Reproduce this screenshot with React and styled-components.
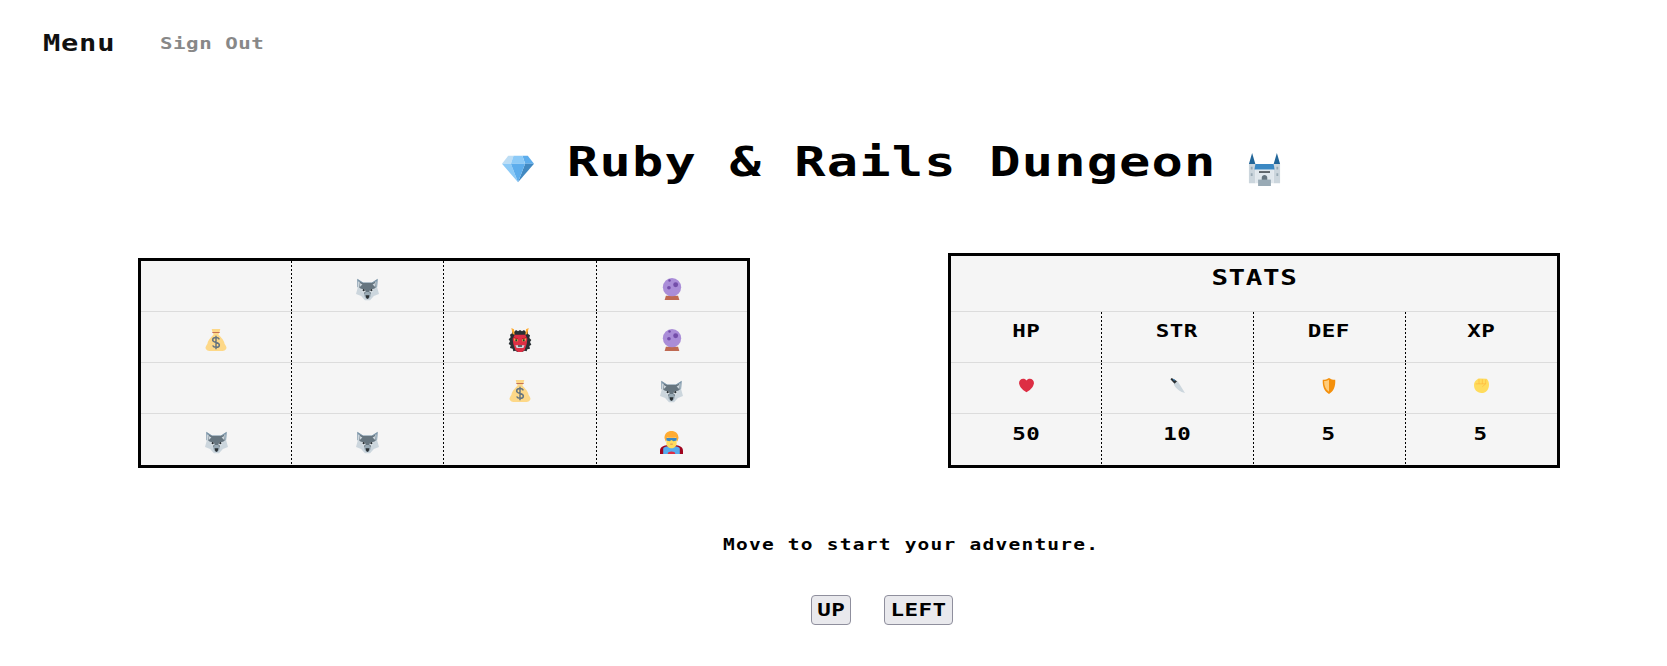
import React from "react";
import styled, { createGlobalStyle } from "styled-components";

const Global = createGlobalStyle`
  html, body { margin: 0; padding: 0; background: #fff; }
  body { font-family: "DejaVu Sans Mono", "Liberation Mono", monospace; color: #000; }
`;

const Page = styled.div`
  width: 1667px;
  height: 666px;
  overflow: hidden;
`;

const Wide = styled.span`
  display: inline-block;
  white-space: nowrap;
  transform: scaleX(${(p) => p.$sx || 1.25});
  transform-origin: ${(p) => p.$origin || "center"};
`;

const Nav = styled.nav`
  display: flex;
  align-items: center;
  height: 28px;
  padding: 29px 0 0 43px;
`;

const MenuLabel = styled(Wide)`
  width: 117px;
  font-size: 23px;
  font-weight: 700;
  letter-spacing: 0.6px;
  color: #111;
`;

const SignOut = styled(Wide)`
  font-size: 16px;
  font-weight: 700;
  letter-spacing: 0.4px;
  color: #888;
`;

const Title = styled.h1`
  display: flex;
  align-items: center;
  margin: 0;
  padding: 74px 0 0 502px;
  height: 62px;
  gap: 33px;
  font-size: 40px;
  font-weight: 700;
  line-height: 62px;
`;

const TitleText = styled(Wide)`
  width: 648px;
  letter-spacing: 0.9px;
`;

const Boards = styled.section`
  display: flex;
  align-items: flex-end;
  gap: 198px;
  height: 215px;
  margin-top: 60px;
  padding-left: 138px;
`;

const Table = styled.div`
  width: 606px;
  border: 3px solid #000;
  background: #f5f5f5;
`;

const Row = styled.div`
  display: grid;
  grid-template-columns: ${(p) => p.$cols};
  height: ${(p) => p.$h || 50}px;
  border-bottom: 1px solid #dcdcdc;
  &:last-child { border-bottom: 0; }
`;

const Cell = styled.div`
  display: flex;
  align-items: center;
  justify-content: center;
  padding-bottom: ${(p) => p.$lift || 0}px;
  box-sizing: border-box;
  &:not(:first-child) {
    background: linear-gradient(#000 50%, transparent 0) left top / 1px 4px repeat-y;
  }
`;

const Heading = styled.div`
  height: 56px;
  padding-top: 8px;
  box-sizing: border-box;
  border-bottom: 1px solid #dcdcdc;
  text-align: center;
  font-size: 22px;
  font-weight: 700;
  line-height: 28px;
`;

const HeadingText = styled(Wide)`
  letter-spacing: 0.5px;
`;

const StatText = styled(Wide)`
  font-size: 18px;
  font-weight: 700;
  letter-spacing: 0.36px;
`;

const Message = styled.p`
  margin: 67px 0 0 723px;
  font-size: 15px;
  font-weight: 700;
  line-height: 20px;
`;

const MessageText = styled(Wide)`
  letter-spacing: 0.95px;
`;

const Controls = styled.div`
  display: flex;
  gap: 33px;
  margin: 40px 0 0 811px;
`;

const MoveButton = styled.button`
  display: flex;
  align-items: center;
  justify-content: center;
  width: ${(p) => p.$w}px;
  height: 30px;
  padding: 0;
  box-sizing: border-box;
  border: 1px solid #8f8f9d;
  border-radius: 4px;
  background: #e9e9ed;
  color: #000;
  font-family: inherit;
  font-size: 18px;
  font-weight: 700;
  line-height: 28px;
`;

const ButtonText = styled(Wide)`
  letter-spacing: 0.36px;
`;

const Glyph = styled.svg`
  display: block;
  flex: none;
  overflow: hidden;
`;

const Icon = ({ size = 22, children, ...rest }) => (
  <Glyph width={size} height={size} viewBox="0 0 36 36" {...rest}>
    {children}
  </Glyph>
);

const Wolf = () => (
  <Icon size={23} style={{ marginTop: 6 }}>
    <path fill="#CCD6DD" d="M2 1l9 6h14l9-6-1 13 3 11-8 3-6 7h-8l-6-7-8-3 3-11z" />
    <path fill="#7C95A8" d="M2 1l9 6h14l9-6-1 13-1 1V5l-8 4H11L3 5v10l-1-1z" />
    <path fill="#66757F" d="M11 8h14l5-2 1 9-6 4-3 8h-8l-3-8-6-4 1-9z" />
    <path fill="#CCD6DD" d="M6 8l4 2-4 4zM30 8l-4 2 4 4z" />
    <path fill="#E1E8ED" d="M8 17l6 1 1 4-4 1zM28 17l-6 1-1 4 4 1z" />
    <circle fill="#292F33" cx="12" cy="19" r="1.700" />
    <circle fill="#292F33" cx="24" cy="19" r="1.700" />
    <path fill="#99AAB5" d="M15 22h6l2 6-3 5h-4l-3-5z" />
    <path fill="#292F33" d="M15 27h6l-1 4-2 2-2-2z" />
  </Icon>
);

const Bag = () => (
  <Icon style={{ marginTop: 6 }}>
    <path fill="#FDD888" d="M11 0h14l-1 4-2 5c2 3 9 8 10 15 1 2 4 5 3 8-2 3-4 4-6 4H7c-2 0-4-1-6-4-1-3 2-6 3-8 1-7 8-12 10-15l-2-5z" />
    <path fill="#BF6952" d="M12 5h12v1.500H12z" />
    <path fill="none" stroke="#67757F" strokeWidth="2.400" d="M23.500 17c-1-2-3-3-5.500-3-3 0-5.500 1.500-5.500 4 0 5 11 3 11 8 0 2.500-2.500 4-5.500 4-2.500 0-4.500-1-5.500-3M18 11v22" />
  </Icon>
);

const Ball = () => (
  <Icon style={{ marginTop: 6 }}>
    <path fill="#BF6952" d="M6 36l2-7h20l2 7z" />
    <circle fill="#AA8DD8" cx="18" cy="15" r="15" />
    <circle fill="#744EAA" cx="24" cy="11" r="4" />
    <circle fill="#744EAA" cx="13" cy="16" r="3" />
    <circle fill="#744EAA" cx="14" cy="4" r="2" />
  </Icon>
);

const Oni = () => (
  <Icon style={{ marginTop: 6 }} size={24}>
    <path fill="#292F33" d="M6 3l3 3 3-3 3 2 3-2 3 2 3-2 3 3 3-3 0 6 3 2-1 4 3 3-2 3 2 4-3 2 1 4-4 1-1 3-3-1-4 2-3-1-4 1-3-2-3 1-1-4-4-1 1-4-3-2 2-4-2-3 3-3-1-4 3-2z" />
    <path fill="#DD2E44" d="M10 10h16l3 6-1 8-3 9-4 3h-6l-4-3-3-9-1-8z" />
    <path fill="#FFAC33" d="M5 0l4 2 1 8-3-1zM31 0l-4 2-1 8 3-1z" />
    <path fill="#FFCC4D" d="M9 15l6 2v3H10zM27 15l-6 2v3h5z" />
    <path fill="#292F33" d="M11 17h3v3h-3zM22 17h3v3h-3z" />
    <path fill="#A0041E" d="M8 14l7 2v1l-7-2zM28 14l-7 2v1l7-2z" />
    <path fill="#CCD6DD" d="M11 26h14l-2 4h-10z" />
    <path fill="#292F33" d="M15 26h6v2h-6z" />
  </Icon>
);

const Hero = () => (
  <Icon style={{ marginTop: 6 }} size={23}>
    <path fill="#A0041E" d="M0 36v-5c0-6 5-9 18-9s18 3 18 9v5z" />
    <path fill="#55ACEE" d="M5 36v-8c0-3 5-4 13-4s13 1 13 4v8z" />
    <path fill="#DD2E44" d="M12 36c0-3 3-4 6-4s6 1 6 4z" />
    <path fill="#FFDC5D" d="M10 10h16v10c0 4-4 7-8 7s-8-3-8-7z" />
    <path fill="#FFAC33" d="M18 0c6 0 11 4 11 11l-2 6-2-7c-4 1-10 1-14 0l-2 7-2-6C7 4 12 0 18 0z" />
    <path fill="#3B88C3" d="M10 11h16v4l-5 1-3-2-3 2-5-1z" />
    <path fill="#C1694F" d="M16 20h4v1h-4z" />
  </Icon>
);

const Heart = () => (
  <Icon size={15}>
    <path fill="#DD2E44" d="M35.885 11.833c0-5.45-4.418-9.868-9.867-9.868-3.308 0-6.227 1.633-8.018 4.129-1.791-2.496-4.71-4.129-8.017-4.129-5.45 0-9.868 4.417-9.868 9.868 0 .772.098 1.52.266 2.241C1.751 22.587 11.216 31.568 18 34.034c6.783-2.466 16.249-11.447 17.617-19.959.17-.721.268-1.469.268-2.242z" />
  </Icon>
);

const Knife = () => (
  <Icon size={15}>
    <path fill="#CCD6DD" d="M9 15l9-8 18 29c-11-2-22-10-27-21z" />
    <path fill="#292F33" d="M1 3l3-3 13 8-6 6z" />
    <path fill="#3B88C3" d="M7 4l2-2 3 3-2 2z" />
  </Icon>
);

const Shield = () => (
  <Icon size={16}>
    <path fill="#F4900C" d="M18 0c4 3 9 4 14 4 1 14-3 26-14 32C7 30 3 18 4 4c5 0 10-1 14-4z" />
    <path fill="#FFCC7A" d="M18 4c-3 2-7 3-11 3 0 11 3 19 11 24z" />
  </Icon>
);

const Fist = () => (
  <Icon size={15}>
    <path fill="#FFDC5D" d="M6 5c2-3 5-4 8-4l16 1c4 3 6 8 6 14 0 11-7 20-18 20S0 28 0 17C0 12 2 8 6 5z" />
    <path fill="none" stroke="#FFAC33" strokeWidth="1.200" d="M12 3v11M20 3v11M28 4v10M4 14h24l-8 7" />
  </Icon>
);

const Gem = () => (
  <Icon size={32} style={{ marginTop: 13 }}>
    <path fill="#BDDDF4" d="M13 3H7l-7 9h10z" />
    <path fill="#5DADEC" d="M36 12l-7-9h-6l3 9z" />
    <path fill="#4289C1" d="M26 12h10L18 33z" />
    <path fill="#8CCAF7" d="M10 12H0l18 21zm3-9l-3 9h16l-3-9z" />
    <path fill="#5DADEC" d="M18 33l-8-21h16z" />
  </Icon>
);

const Castle = () => (
  <Icon size={33} style={{ marginTop: 14 }}>
    <path fill="#CCD6DD" d="M1 12h7v21H1zM28 12h7v21h-7z" />
    <path fill="#226699" d="M4.500 0L8 12H1zM31.500 0L35 12h-7z" />
    <path fill="#E1E8ED" d="M8 18h20v15H8z" />
    <path fill="#3B88C3" d="M8 12h20l1 6H7z" />
    <path fill="#99AAB5" d="M3 15h2v3H3zM3 22h2v3H3zM31 15h2v3h-2zM31 22h2v3h-2z" />
    <path fill="#292F33" d="M12 20h12v1.500H12z" />
    <path fill="#66757F" d="M15 27c0-4 6-4 6 0v3h-6z" />
    <path fill="#99AAB5" d="M11 29h14v7H11z" />
  </Icon>
);

const grid = [
  [null, Wolf, null, Ball],
  [Bag, null, Oni, Ball],
  [null, null, Bag, Wolf],
  [Wolf, Wolf, null, Hero],
];

const stats = [
  ["HP", Heart, "50"],
  ["STR", Knife, "10"],
  ["DEF", Shield, "5"],
  ["XP", Fist, "5"],
];

const mapCols = "150px 152px 153px 151px";
const statCols = "150px 152px 152px 152px";

export default function App() {
  return (
    <Page>
      <Global />
      <Nav>
        <MenuLabel $origin="left">Menu</MenuLabel>
        <SignOut $origin="left" $sx={1.3}>Sign Out</SignOut>
      </Nav>
      <Title>
        <Gem />
        <TitleText $origin="left" $sx={1.3}>Ruby &amp; Rails Dungeon</TitleText>
        <Castle />
      </Title>
      <Boards>
        <Table>
          {grid.map((row, r) => (
            <Row key={r} $cols={mapCols} $h={r === 3 ? 51 : 50}>
              {row.map((Item, c) => (
                <Cell key={c}>{Item ? <Item /> : null}</Cell>
              ))}
            </Row>
          ))}
        </Table>
        <Table>
          <Heading>
            <HeadingText>STATS</HeadingText>
          </Heading>
          <Row $cols={statCols}>
            {stats.map(([label]) => (
              <Cell key={label} $lift={14}>
                <StatText>{label}</StatText>
              </Cell>
            ))}
          </Row>
          <Row $cols={statCols}>
            {stats.map(([label, Item]) => (
              <Cell key={label} $lift={5}>
                <Item />
              </Cell>
            ))}
          </Row>
          <Row $cols={statCols} $h={51}>
            {stats.map(([label, , value]) => (
              <Cell key={label} $lift={12}>
                <StatText>{value}</StatText>
              </Cell>
            ))}
          </Row>
        </Table>
      </Boards>
      <Message>
        <MessageText $origin="left" $sx={1.3}>Move to start your adventure.</MessageText>
      </Message>
      <Controls>
        <MoveButton $w={40}>
          <ButtonText>UP</ButtonText>
        </MoveButton>
        <MoveButton $w={69}>
          <ButtonText>LEFT</ButtonText>
        </MoveButton>
      </Controls>
    </Page>
  );
}
